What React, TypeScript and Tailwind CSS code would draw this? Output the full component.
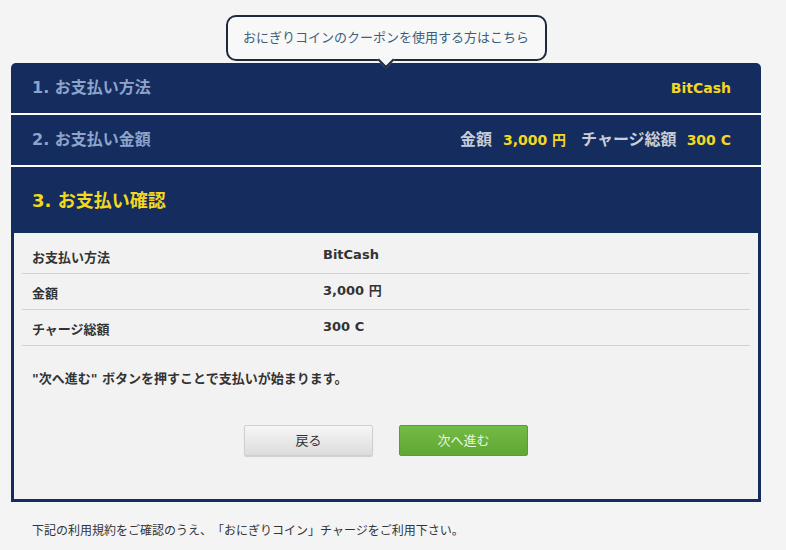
const FONT = { fontFamily: '"DejaVu Sans", "Noto Sans CJK JP", sans-serif' }

function Row({ label, value }: { label: string; value: string }) {
  return (
    <div className="flex h-[36px] border-b border-[#d2d2d2]">
      <div className="w-[301px] pl-[10px] pt-[10px] text-[13px] leading-[20px] font-bold text-[#333]">{label}</div>
      <div className="pt-[7px] text-[13px] leading-[20px] font-bold text-[#333]">{value}</div>
    </div>
  )
}

export default function App() {
  return (
    <div className="min-h-[550px] bg-[#f4f4f4] [text-spacing-trim:space-all]" style={FONT}>
      <div className="ml-[11px] w-[750px] pt-[15px]">
        {/* coupon balloon */}
        <div className="flex justify-center">
          <div className="relative z-10 flex h-[46px] w-[321px] items-center justify-center rounded-[10px] border-2 border-[#1d2a3b] bg-[#f8f8f8] text-[13px] text-[#3d5f7a]">
            おにぎりコインのクーポンを使用する方はこちら
            <span className="absolute -bottom-[7px] left-1/2 h-[12px] w-[12px] -translate-x-1/2 rotate-45 border-r-2 border-b-2 border-[#1d2a3b] bg-[#f8f8f8]" />
          </div>
        </div>

        <div className="mt-[2px]">
          <div className="flex h-[50px] items-center justify-between rounded-t-[5px] bg-[#152c5f] pl-[21px] pr-[30px]">
            <span className="text-[16px] font-bold text-[#8ea4ca]">1. お支払い方法</span>
            <span className="text-[14px] font-bold text-[#f3d81d]">BitCash</span>
          </div>
          <div className="h-[2px] bg-white" />
          <div className="flex h-[50px] items-center justify-between bg-[#152c5f] pl-[21px] pr-[30px]">
            <span className="text-[16px] font-bold text-[#8ea4ca]">2. お支払い金額</span>
            <span className="flex items-center text-[16px] font-bold">
              <span className="text-[#c9cdd5]">金額</span>
              <span className="ml-[11px] text-[14px] text-[#f3d81d]">3,000 円</span>
              <span className="ml-[15px] text-[#c9cdd5]">チャージ総額</span>
              <span className="ml-[10px] text-[14px] text-[#f3d81d]">300 C</span>
            </span>
          </div>
          <div className="h-[2px] bg-white" />
          <div className="flex h-[66px] items-center bg-[#152c5f] pl-[21px]">
            <span className="text-[18px] font-bold text-[#f3d81d]">3. お支払い確認</span>
          </div>

          <div className="border-x-[3px] border-b-[3px] border-[#152c5f] bg-[#f2f2f2] px-[8px] pt-[5px] pb-[43px]">
            <Row label="お支払い方法" value="BitCash" />
            <Row label="金額" value="3,000 円" />
            <Row label="チャージ総額" value="300 C" />
            <p className="mt-[23px] pl-[10px] text-[13px] leading-[20px] font-bold text-[#333]">
              "次へ進む" ボタンを押すことで支払いが始まります。
            </p>
            <div className="mt-[36px] flex justify-center gap-[26px]">
              <button className="h-[31px] w-[129px] rounded-[2px] border border-[#cfcfcf] bg-gradient-to-b from-[#f6f6f6] to-[#dcdcdc] text-[13px] text-[#333] shadow-[0_1px_1px_rgba(0,0,0,0.15)]">
                戻る
              </button>
              <button className="h-[31px] w-[129px] rounded-[2px] border border-[#5a9e32] bg-gradient-to-b from-[#74bb45] to-[#5fa834] text-[13px] text-[#eaf6df]">
                次へ進む
              </button>
            </div>
          </div>
        </div>

        <p className="mt-[20px] pl-[21px] text-[12px] leading-[18px] text-[#333]">
          下記の利用規約をご確認のうえ、「おにぎりコイン」チャージをご利用下さい。
        </p>
      </div>
    </div>
  )
}
